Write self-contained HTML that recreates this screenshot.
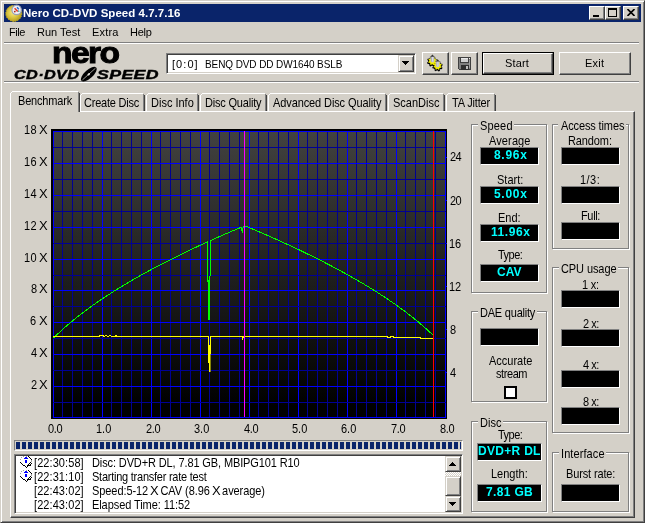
<!DOCTYPE html><html><head><meta charset="utf-8"><title>Nero CD-DVD Speed</title><style>
*{box-sizing:border-box;margin:0;padding:0}
html,body{width:645px;height:523px;overflow:hidden;background:#D4D0C8}
body{position:relative;font:12px "Liberation Sans",sans-serif;color:#000}
.a{position:absolute}
.t{position:absolute;white-space:nowrap;line-height:14px;height:14px}
.hl{position:absolute;height:1px}
.vl{position:absolute;width:1px}
.btn{position:absolute;background:#D4D0C8;border:1px solid;border-color:#fff #404040 #404040 #fff;box-shadow:inset -1px -1px 0 #808080}
.btn2{position:absolute;background:#D4D0C8;border:1px solid;border-color:#D4D0C8 #404040 #404040 #D4D0C8;box-shadow:inset 1px 1px 0 #fff, inset -1px -1px 0 #808080}
.grp{position:absolute;border:1px solid #808080;box-shadow:1px 1px 0 #fff, inset 1px 1px 0 #fff}
.gl{position:absolute;background:#D4D0C8;height:4px}
.bb{position:absolute;background:#000;border:1px solid;border-color:#808080 #fff #fff #808080}
</style></head><body><div id="w" style="position:absolute;left:0;top:0;width:645px;height:523px;will-change:transform">
<div class="a" style="left:0;top:0;width:645px;height:523px;border:1px solid;border-color:#D4D0C8 #404040 #404040 #D4D0C8;box-shadow:inset 1px 1px 0 #fff, inset -1px -1px 0 #808080"></div>
<div class="a" style="left:4px;top:4px;width:637px;height:18px;background:#0A246A"></div>
<svg class="a" style="left:5px;top:4px" width="18" height="18" viewBox="0 0 18 18">
<defs><radialGradient id="cd" cx="45%" cy="45%" r="60%"><stop offset="0" stop-color="#f4e890"/><stop offset="0.45" stop-color="#e0cc48"/><stop offset="1" stop-color="#b09818"/></radialGradient></defs>
<circle cx="8.8" cy="9.4" r="8" fill="url(#cd)"/>
<circle cx="8.8" cy="9.4" r="8" fill="none" stroke="#c8b020" stroke-width="1" stroke-dasharray="1.5 1"/>
<circle cx="11.6" cy="5.9" r="4.7" fill="#f0f0f4" stroke="#98a0b8" stroke-width="1.2"/>
<path d="M9.6 4.2l3.2 3.4" stroke="#e03828" stroke-width="1.5"/>
<path d="M12 3.2l1.8 2" stroke="#2868d8" stroke-width="1.4"/>
<path d="M13.2 6.6l1 1" stroke="#20a090" stroke-width="1.2"/>
<circle cx="9.8" cy="7.6" r="0.9" fill="#b02818"/>
</svg>
<div class="t" id="title" style="left:23.00px;top:6px;font-size:11.5px;letter-spacing:0.028px;color:#fff;font-weight:bold;">Nero CD-DVD Speed 4.7.7.16</div>
<div class="btn" style="left:589px;top:6px;width:16px;height:14px"></div>
<div class="btn" style="left:605px;top:6px;width:16px;height:14px"></div>
<div class="btn" style="left:623px;top:6px;width:16px;height:14px"></div>
<div class="a" style="left:593px;top:15px;width:6px;height:2px;background:#000"></div>
<div class="a" style="left:608px;top:8px;width:9px;height:9px;border:1px solid #000;border-top-width:2px"></div>
<svg class="a" style="left:627px;top:9px" width="8" height="7" viewBox="0 0 8 7"><path d="M0.5 0L7.5 7M7.5 0L0.5 7" stroke="#000" stroke-width="1.6" fill="none"/></svg>
<div class="t" id="menu0" style="left:9.00px;top:25px;font-size:11px;letter-spacing:-0.466px;color:#000;">File</div>
<div class="t" id="menu1" style="left:37.00px;top:25px;font-size:11px;letter-spacing:0.000px;color:#000;">Run Test</div>
<div class="t" id="menu2" style="left:92.00px;top:25px;font-size:11px;letter-spacing:0.175px;color:#000;">Extra</div>
<div class="t" id="menu3" style="left:130.00px;top:25px;font-size:11px;letter-spacing:-0.233px;color:#000;">Help</div>
<div class="hl" style="left:4px;top:42px;width:635px;background:#808080"></div>
<div class="hl" style="left:4px;top:43px;width:635px;background:#fff"></div>
<div class="hl" style="left:4px;top:81px;width:635px;background:#808080"></div>
<div class="hl" style="left:4px;top:82px;width:635px;background:#fff"></div>
<div class="t" id="nero" style="left:52px;top:35px;font:bold 30px 'Liberation Sans',sans-serif;line-height:36px;height:36px;letter-spacing:-1.45px;-webkit-text-stroke:1px #000;transform-origin:0 0;transform:scaleX(1.12)">nero</div>
<div class="t" id="cddvd" style="left:14px;top:68px;font:italic bold 13px 'Liberation Sans',sans-serif;line-height:14px;height:14px;transform-origin:0 0;transform:scaleX(1.25);letter-spacing:0.3px;-webkit-text-stroke:0.45px #000">CD·DVD</div>
<div class="t" id="speed" style="left:97px;top:68px;font:italic bold 13px 'Liberation Sans',sans-serif;line-height:14px;height:14px;transform-origin:0 0;transform:scaleX(1.36);letter-spacing:0.3px;-webkit-text-stroke:0.45px #000">SPEED</div>
<svg class="a" style="left:78px;top:64px" width="20" height="20" viewBox="0 0 20 20">
<g transform="translate(10.8,10.2) rotate(-42)"><ellipse rx="9.9" ry="4.2" fill="#000"/><line x1="-8.5" x2="9" y1="0" y2="0" stroke="#D4D0C8" stroke-width="0.7"/><ellipse rx="1.5" ry="1" fill="#E8E6E0"/></g>
</svg>
<div class="a" style="left:166px;top:53px;width:250px;height:21px;background:#fff;border:1px solid;border-color:#808080 #fff #fff #808080;box-shadow:inset 1px 1px 0 #404040, inset -1px -1px 0 #D4D0C8"></div>
<div class="t" id="combo0" style="left:172.00px;top:57px;font-size:11px;letter-spacing:1.050px;color:#000;">[0:0]</div>
<div class="t" id="combo1" style="left:205.00px;top:58px;font-size:10px;letter-spacing:-0.096px;color:#000;transform:scaleY(1.12);transform-origin:0 11px;">BENQ DVD DD DW1640 BSLB</div>
<div class="btn2" style="left:398px;top:55px;width:16px;height:17px"></div>
<svg class="a" style="left:402px;top:61px" width="7" height="4" shape-rendering="crispEdges"><path d="M0 0h7v1h-1v1h-1v1h-1v1h-1v-1h-1v-1h-1v-1h-1z" fill="#000"/></svg>
<div class="btn" style="left:422px;top:52px;width:27px;height:23px"></div>
<div class="btn" style="left:451px;top:52px;width:27px;height:23px"></div>
<svg class="a" style="left:426px;top:54px" width="19" height="18" viewBox="0 0 19 18"><path d="M10.51 8.35L11.33 9.16L10.70 10.46L9.56 10.30L8.68 11.08L8.69 12.23L7.31 12.70L6.62 11.79L5.45 11.71L4.64 12.53L3.34 11.90L3.50 10.76L2.72 9.88L1.57 9.89L1.10 8.51L2.01 7.82L2.09 6.65L1.27 5.84L1.90 4.54L3.04 4.70L3.92 3.92L3.91 2.77L5.29 2.30L5.98 3.21L7.15 3.29L7.96 2.47L9.26 3.10L9.10 4.24L9.88 5.12L11.03 5.11L11.50 6.49L10.59 7.18Z" fill="#000"/><path d="M15.71 13.05L16.53 13.86L15.90 15.16L14.76 15.00L13.88 15.78L13.89 16.93L12.51 17.40L11.82 16.49L10.65 16.41L9.84 17.23L8.54 16.60L8.70 15.46L7.92 14.58L6.77 14.59L6.30 13.21L7.21 12.52L7.29 11.35L6.47 10.54L7.10 9.24L8.24 9.40L9.12 8.62L9.11 7.47L10.49 7.00L11.18 7.91L12.35 7.99L13.16 7.17L14.46 7.80L14.30 8.94L15.08 9.82L16.23 9.81L16.70 11.19L15.79 11.88Z" fill="#000"/><path d="M9.54 7.64L10.39 8.31L9.88 9.35L8.83 9.09L8.17 9.67L8.29 10.75L7.20 11.12L6.64 10.19L5.76 10.14L5.09 10.99L4.05 10.48L4.31 9.43L3.73 8.77L2.65 8.89L2.28 7.80L3.21 7.24L3.26 6.36L2.41 5.69L2.92 4.65L3.97 4.91L4.63 4.33L4.51 3.25L5.60 2.88L6.16 3.81L7.04 3.86L7.71 3.01L8.75 3.52L8.49 4.57L9.07 5.23L10.15 5.11L10.52 6.20L9.59 6.76Z" fill="#F0EC00"/><circle cx="6.40" cy="6.70" r="1.9" fill="#D4D0C8"/><rect x="4.50" y="1.00" width="3.8" height="5" fill="#D4D0C8"/><path d="M14.74 12.34L15.59 13.01L15.08 14.05L14.03 13.79L13.37 14.37L13.49 15.45L12.40 15.82L11.84 14.89L10.96 14.84L10.29 15.69L9.25 15.18L9.51 14.13L8.93 13.47L7.85 13.59L7.48 12.50L8.41 11.94L8.46 11.06L7.61 10.39L8.12 9.35L9.17 9.61L9.83 9.03L9.71 7.95L10.80 7.58L11.36 8.51L12.24 8.56L12.91 7.71L13.95 8.22L13.69 9.27L14.27 9.93L15.35 9.81L15.72 10.90L14.79 11.46Z" fill="#F0EC00"/><circle cx="11.60" cy="11.40" r="1.9" fill="#D4D0C8"/><rect x="9.70" y="5.70" width="3.8" height="5" fill="#D4D0C8"/><rect x="5.10" y="2.40" width="2.6" height="5.4" fill="#A8A8B8"/><rect x="6.30" y="2.40" width="0.9" height="5.2" fill="#F0F0F8"/><path d="M4.40 2.80L6.40 0.60L8.40 2.80Z" fill="#303030"/><rect x="10.30" y="7.10" width="2.6" height="5.4" fill="#A8A8B8"/><rect x="11.50" y="7.10" width="0.9" height="5.2" fill="#F0F0F8"/><path d="M9.60 7.50L11.60 5.30L13.60 7.50Z" fill="#303030"/></svg>
<svg class="a" style="left:458px;top:57px" width="13" height="13" viewBox="0 0 13 13" shape-rendering="crispEdges">
<rect x="0" y="0" width="13" height="13" fill="#404040"/>
<rect x="1" y="1" width="11" height="11" fill="#808080"/>
<rect x="2" y="0" width="9" height="6" fill="#404040"/>
<rect x="3" y="1" width="7" height="4" fill="#D0D0D0"/>
<rect x="3" y="1" width="7" height="1" fill="#E8E8E8"/>
<rect x="3" y="8" width="8" height="5" fill="#303030"/>
<rect x="8" y="9" width="2" height="3" fill="#C0C0C0"/>
<rect x="11" y="1" width="1" height="1" fill="#F0F0F0"/>
<rect x="11" y="3" width="1" height="8" fill="#A0A0A0"/>
<rect x="0" y="12" width="1" height="1" fill="#D4D0C8"/>
</svg>
<div class="a" style="left:482px;top:52px;width:72px;height:23px;border:1px solid #000"></div>
<div class="btn" style="left:483px;top:53px;width:70px;height:21px"></div>
<div class="t" id="start" style="left:505.00px;top:56px;font-size:11px;letter-spacing:0.175px;color:#000;">Start</div>
<div class="btn" style="left:559px;top:52px;width:72px;height:23px"></div>
<div class="t" id="exit" style="left:585.00px;top:56px;font-size:11px;letter-spacing:0.233px;color:#000;">Exit</div>
<div class="a" style="left:10px;top:111px;width:625px;height:407px;border:1px solid;border-color:#fff #404040 #404040 #fff;box-shadow:inset -1px -1px 0 #808080"></div>
<div class="a" style="left:80px;top:93px;width:65px;height:18px;background:#D4D0C8"><div class="vl" style="left:0;top:2px;height:16px;background:#fff"></div><div class="a" style="left:1px;top:1px;width:1px;height:1px;background:#fff"></div><div class="hl" style="left:2px;top:0;width:61px;background:#fff"></div><div class="vl" style="left:63px;top:1px;height:17px;background:#808080"></div><div class="vl" style="left:64px;top:2px;height:16px;background:#404040"></div></div>
<div class="t" id="tab0" style="left:84.00px;top:96px;font-size:11px;letter-spacing:-0.210px;color:#000;transform:scaleY(1.13);transform-origin:0 11px;">Create Disc</div>
<div class="a" style="left:146px;top:93px;width:53px;height:18px;background:#D4D0C8"><div class="vl" style="left:0;top:2px;height:16px;background:#fff"></div><div class="a" style="left:1px;top:1px;width:1px;height:1px;background:#fff"></div><div class="hl" style="left:2px;top:0;width:49px;background:#fff"></div><div class="vl" style="left:51px;top:1px;height:17px;background:#808080"></div><div class="vl" style="left:52px;top:2px;height:16px;background:#404040"></div></div>
<div class="t" id="tab1" style="left:151.00px;top:96px;font-size:11px;letter-spacing:0.000px;color:#000;transform:scaleY(1.13);transform-origin:0 11px;">Disc Info</div>
<div class="a" style="left:200px;top:93px;width:67px;height:18px;background:#D4D0C8"><div class="vl" style="left:0;top:2px;height:16px;background:#fff"></div><div class="a" style="left:1px;top:1px;width:1px;height:1px;background:#fff"></div><div class="hl" style="left:2px;top:0;width:63px;background:#fff"></div><div class="vl" style="left:65px;top:1px;height:17px;background:#808080"></div><div class="vl" style="left:66px;top:2px;height:16px;background:#404040"></div></div>
<div class="t" id="tab2" style="left:205.00px;top:96px;font-size:11px;letter-spacing:-0.191px;color:#000;transform:scaleY(1.13);transform-origin:0 11px;">Disc Quality</div>
<div class="a" style="left:268px;top:93px;width:119px;height:18px;background:#D4D0C8"><div class="vl" style="left:0;top:2px;height:16px;background:#fff"></div><div class="a" style="left:1px;top:1px;width:1px;height:1px;background:#fff"></div><div class="hl" style="left:2px;top:0;width:115px;background:#fff"></div><div class="vl" style="left:117px;top:1px;height:17px;background:#808080"></div><div class="vl" style="left:118px;top:2px;height:16px;background:#404040"></div></div>
<div class="t" id="tab3" style="left:273.00px;top:96px;font-size:11px;letter-spacing:-0.105px;color:#000;transform:scaleY(1.13);transform-origin:0 11px;">Advanced Disc Quality</div>
<div class="a" style="left:388px;top:93px;width:57px;height:18px;background:#D4D0C8"><div class="vl" style="left:0;top:2px;height:16px;background:#fff"></div><div class="a" style="left:1px;top:1px;width:1px;height:1px;background:#fff"></div><div class="hl" style="left:2px;top:0;width:53px;background:#fff"></div><div class="vl" style="left:55px;top:1px;height:17px;background:#808080"></div><div class="vl" style="left:56px;top:2px;height:16px;background:#404040"></div></div>
<div class="t" id="tab4" style="left:393.00px;top:96px;font-size:11px;letter-spacing:0.000px;color:#000;transform:scaleY(1.13);transform-origin:0 11px;">ScanDisc</div>
<div class="a" style="left:446px;top:93px;width:50px;height:18px;background:#D4D0C8"><div class="vl" style="left:0;top:2px;height:16px;background:#fff"></div><div class="a" style="left:1px;top:1px;width:1px;height:1px;background:#fff"></div><div class="hl" style="left:2px;top:0;width:46px;background:#fff"></div><div class="vl" style="left:48px;top:1px;height:17px;background:#808080"></div><div class="vl" style="left:49px;top:2px;height:16px;background:#404040"></div></div>
<div class="t" id="tab5" style="left:452.00px;top:96px;font-size:11px;letter-spacing:-0.176px;color:#000;transform:scaleY(1.13);transform-origin:0 11px;">TA Jitter</div>
<div class="a" style="left:10px;top:91px;width:70px;height:21px;background:#D4D0C8"><div class="vl" style="left:0;top:2px;height:19px;background:#fff"></div><div class="a" style="left:1px;top:1px;width:1px;height:1px;background:#fff"></div><div class="hl" style="left:2px;top:0;width:66px;background:#fff"></div><div class="vl" style="left:68px;top:1px;height:20px;background:#808080"></div><div class="vl" style="left:69px;top:2px;height:19px;background:#404040"></div></div>
<div class="t" id="tabsel" style="left:18.00px;top:94px;font-size:11px;letter-spacing:-0.175px;color:#000;transform:scaleY(1.13);transform-origin:0 11px;">Benchmark</div>
<svg class="a" style="left:0;top:0" width="645" height="523" viewBox="0 0 645 523" shape-rendering="crispEdges">
<defs><linearGradient id="bg" x1="0" y1="0" x2="0" y2="1"><stop offset="0" stop-color="#424240"/><stop offset="0.96" stop-color="#000000"/></linearGradient></defs>
<rect x="51" y="129" width="396" height="290" fill="#000"/>
<rect x="53" y="131" width="393" height="287" fill="url(#bg)"/>
<rect x="53" y="131" width="1" height="287" fill="#0000FF"/>
<rect x="62" y="131" width="1" height="287" fill="#000094"/>
<rect x="72" y="131" width="1" height="287" fill="#000094"/>
<rect x="82" y="131" width="1" height="287" fill="#000094"/>
<rect x="92" y="131" width="1" height="287" fill="#000094"/>
<rect x="102" y="131" width="1" height="287" fill="#0000FF"/>
<rect x="111" y="131" width="1" height="287" fill="#000094"/>
<rect x="121" y="131" width="1" height="287" fill="#000094"/>
<rect x="131" y="131" width="1" height="287" fill="#000094"/>
<rect x="141" y="131" width="1" height="287" fill="#000094"/>
<rect x="151" y="131" width="1" height="287" fill="#0000FF"/>
<rect x="160" y="131" width="1" height="287" fill="#000094"/>
<rect x="170" y="131" width="1" height="287" fill="#000094"/>
<rect x="180" y="131" width="1" height="287" fill="#000094"/>
<rect x="190" y="131" width="1" height="287" fill="#000094"/>
<rect x="200" y="131" width="1" height="287" fill="#0000FF"/>
<rect x="209" y="131" width="1" height="287" fill="#000094"/>
<rect x="219" y="131" width="1" height="287" fill="#000094"/>
<rect x="229" y="131" width="1" height="287" fill="#000094"/>
<rect x="239" y="131" width="1" height="287" fill="#000094"/>
<rect x="249" y="131" width="1" height="287" fill="#0000FF"/>
<rect x="258" y="131" width="1" height="287" fill="#000094"/>
<rect x="268" y="131" width="1" height="287" fill="#000094"/>
<rect x="278" y="131" width="1" height="287" fill="#000094"/>
<rect x="288" y="131" width="1" height="287" fill="#000094"/>
<rect x="298" y="131" width="1" height="287" fill="#0000FF"/>
<rect x="307" y="131" width="1" height="287" fill="#000094"/>
<rect x="317" y="131" width="1" height="287" fill="#000094"/>
<rect x="327" y="131" width="1" height="287" fill="#000094"/>
<rect x="337" y="131" width="1" height="287" fill="#000094"/>
<rect x="347" y="131" width="1" height="287" fill="#0000FF"/>
<rect x="356" y="131" width="1" height="287" fill="#000094"/>
<rect x="366" y="131" width="1" height="287" fill="#000094"/>
<rect x="376" y="131" width="1" height="287" fill="#000094"/>
<rect x="386" y="131" width="1" height="287" fill="#000094"/>
<rect x="396" y="131" width="1" height="287" fill="#0000FF"/>
<rect x="405" y="131" width="1" height="287" fill="#000094"/>
<rect x="415" y="131" width="1" height="287" fill="#000094"/>
<rect x="425" y="131" width="1" height="287" fill="#000094"/>
<rect x="435" y="131" width="1" height="287" fill="#000094"/>
<rect x="445" y="131" width="1" height="287" fill="#0000FF"/>
<rect x="53" y="131" width="393" height="1" fill="#0000FF"/>
<rect x="53" y="147" width="393" height="1" fill="#000094"/>
<rect x="53" y="163" width="393" height="1" fill="#0000FF"/>
<rect x="53" y="179" width="393" height="1" fill="#000094"/>
<rect x="53" y="195" width="393" height="1" fill="#0000FF"/>
<rect x="53" y="211" width="393" height="1" fill="#000094"/>
<rect x="53" y="227" width="393" height="1" fill="#0000FF"/>
<rect x="53" y="243" width="393" height="1" fill="#000094"/>
<rect x="53" y="259" width="393" height="1" fill="#0000FF"/>
<rect x="53" y="275" width="393" height="1" fill="#000094"/>
<rect x="53" y="290" width="393" height="1" fill="#0000FF"/>
<rect x="53" y="306" width="393" height="1" fill="#000094"/>
<rect x="53" y="322" width="393" height="1" fill="#0000FF"/>
<rect x="53" y="338" width="393" height="1" fill="#000094"/>
<rect x="53" y="354" width="393" height="1" fill="#0000FF"/>
<rect x="53" y="370" width="393" height="1" fill="#000094"/>
<rect x="53" y="386" width="393" height="1" fill="#0000FF"/>
<rect x="53" y="402" width="393" height="1" fill="#000094"/>
<rect x="53" y="417" width="393" height="1" fill="#0000FF"/>
<rect x="446" y="372" width="1" height="1" fill="#0000FF"/>
<rect x="446" y="329" width="1" height="1" fill="#0000FF"/>
<rect x="446" y="286" width="1" height="1" fill="#0000FF"/>
<rect x="446" y="243" width="1" height="1" fill="#0000FF"/>
<rect x="446" y="200" width="1" height="1" fill="#0000FF"/>
<rect x="446" y="157" width="1" height="1" fill="#0000FF"/>
</svg>
<svg class="a" style="left:0;top:0" width="645" height="523" viewBox="0 0 645 523">
<polyline shape-rendering="crispEdges" fill="none" stroke="#00FF00" stroke-width="1" points="53.5,338.1 54.5,337.1 55.5,336.1 56.5,335.1 57.5,334.1 58.5,333.2 59.5,332.3 60.5,331.3 61.5,330.4 62.5,329.5 63.5,328.6 64.5,327.7 65.5,326.8 66.5,326.0 67.5,325.1 68.5,324.2 69.5,323.4 70.5,322.5 71.5,321.7 72.5,320.9 73.5,320.1 74.5,319.2 75.5,318.4 76.5,317.6 77.5,316.8 78.5,316.1 79.5,315.3 80.5,314.5 81.5,313.7 82.5,313.0 83.5,312.2 84.5,311.4 85.5,310.7 86.5,310.0 87.5,309.2 88.5,308.5 89.5,307.8 90.5,307.0 91.5,306.3 92.5,305.6 93.5,304.9 94.5,304.2 95.5,303.5 96.5,302.8 97.5,302.1 98.5,301.4 99.5,300.7 100.5,300.1 101.5,299.4 102.5,298.7 103.5,298.0 104.5,297.4 105.5,296.7 106.5,296.1 107.5,295.4 108.5,294.8 109.5,294.1 110.5,293.5 111.5,292.8 112.5,292.2 113.5,291.5 114.5,290.9 115.5,290.3 116.5,289.7 117.5,289.0 118.5,288.4 119.5,287.8 120.5,287.2 121.5,286.6 122.5,286.0 123.5,285.4 124.5,284.8 125.5,284.2 126.5,283.6 127.5,283.0 128.5,282.4 129.5,281.8 130.5,281.2 131.5,280.6 132.5,280.1 133.5,279.5 134.5,278.9 135.5,278.3 136.5,277.8 137.5,277.2 138.5,276.6 139.5,276.1 140.5,275.5 141.5,274.9 142.5,274.4 143.5,273.8 144.5,273.3 145.5,272.7 146.5,272.2 147.5,271.6 148.5,271.1 149.5,270.5 150.5,270.0 151.5,269.5 152.5,268.9 153.5,268.4 154.5,267.9 155.5,267.3 156.5,266.8 157.5,266.3 158.5,265.8 159.5,265.2 160.5,264.7 161.5,264.2 162.5,263.7 163.5,263.2 164.5,262.6 165.5,262.1 166.5,261.6 167.5,261.1 168.5,260.6 169.5,260.1 170.5,259.6 171.5,259.1 172.5,258.6 173.5,258.1 174.5,257.6 175.5,257.1 176.5,256.6 177.5,256.1 178.5,255.6 179.5,255.1 180.5,254.6 181.5,254.1 182.5,253.6 183.5,253.2 184.5,252.7 185.5,252.2 186.5,251.7 187.5,251.2 188.5,250.8 189.5,250.3 190.5,249.8 191.5,249.3 192.5,248.9 193.5,248.4 194.5,247.9 195.5,247.4 196.5,247.0 197.5,246.5 198.5,246.0 199.5,245.6 200.5,245.1 201.5,244.7 202.5,244.2 203.5,243.7 204.5,243.3 205.5,242.8 206.5,242.4 207.5,241.9 207.5,262.0 208.5,300.0 209.0,319.5 209.5,300.0 210.3,262.0 210.5,240.5 211.5,240.1 212.5,239.7 213.5,239.2 214.5,238.8 215.5,238.3 216.5,237.9 217.5,237.4 218.5,237.0 219.5,236.6 220.5,236.1 221.5,235.7 222.5,235.2 223.5,234.8 224.5,234.4 225.5,233.9 226.5,233.5 227.5,233.1 228.5,232.6 229.5,232.2 230.5,231.8 231.5,231.4 232.5,230.9 233.5,230.5 234.5,230.1 235.5,229.7 236.5,229.2 237.5,228.8 238.5,228.4 239.5,228.0 240.5,227.5 241.5,227.1 242.3,232.5 243.2,227.0 245.0,225.9 246.0,226.3 247.0,226.7 248.0,227.1 249.0,227.6 250.0,228.0 251.0,228.4 252.0,228.8 253.0,229.3 254.0,229.7 255.0,230.1 256.0,230.5 257.0,231.0 258.0,231.4 259.0,231.8 260.0,232.2 261.0,232.7 262.0,233.1 263.0,233.5 264.0,234.0 265.0,234.4 266.0,234.8 267.0,235.3 268.0,235.7 269.0,236.1 270.0,236.6 271.0,237.0 272.0,237.5 273.0,237.9 274.0,238.4 275.0,238.8 276.0,239.2 277.0,239.7 278.0,240.1 279.0,240.6 280.0,241.0 281.0,241.5 282.0,241.9 283.0,242.4 284.0,242.9 285.0,243.3 286.0,243.8 287.0,244.2 288.0,244.7 289.0,245.1 290.0,245.6 291.0,246.1 292.0,246.5 293.0,247.0 294.0,247.5 295.0,247.9 296.0,248.4 297.0,248.9 298.0,249.4 299.0,249.8 300.0,250.3 301.0,250.8 302.0,251.3 303.0,251.7 304.0,252.2 305.0,252.7 306.0,253.2 307.0,253.7 308.0,254.2 309.0,254.6 310.0,255.1 311.0,255.6 312.0,256.1 313.0,256.6 314.0,257.1 315.0,257.6 316.0,258.1 317.0,258.6 318.0,259.1 319.0,259.6 320.0,260.1 321.0,260.6 322.0,261.1 323.0,261.6 324.0,262.1 325.0,262.7 326.0,263.2 327.0,263.7 328.0,264.2 329.0,264.7 330.0,265.3 331.0,265.8 332.0,266.3 333.0,266.8 334.0,267.4 335.0,267.9 336.0,268.4 337.0,269.0 338.0,269.5 339.0,270.0 340.0,270.6 341.0,271.1 342.0,271.7 343.0,272.2 344.0,272.8 345.0,273.3 346.0,273.9 347.0,274.4 348.0,275.0 349.0,275.5 350.0,276.1 351.0,276.7 352.0,277.2 353.0,277.8 354.0,278.4 355.0,278.9 356.0,279.5 357.0,280.1 358.0,280.7 359.0,281.3 360.0,281.8 361.0,282.4 362.0,283.0 363.0,283.6 364.0,284.2 365.0,284.8 366.0,285.4 367.0,286.0 368.0,286.6 369.0,287.2 370.0,287.8 371.0,288.5 372.0,289.1 373.0,289.7 374.0,290.3 375.0,291.0 376.0,291.6 377.0,292.2 378.0,292.9 379.0,293.5 380.0,294.1 381.0,294.8 382.0,295.4 383.0,296.1 384.0,296.7 385.0,297.4 386.0,298.1 387.0,298.7 388.0,299.4 389.0,300.1 390.0,300.8 391.0,301.5 392.0,302.1 393.0,302.8 394.0,303.5 395.0,304.2 396.0,304.9 397.0,305.6 398.0,306.4 399.0,307.1 400.0,307.8 401.0,308.5 402.0,309.3 403.0,310.0 404.0,310.7 405.0,311.5 406.0,312.2 407.0,313.0 408.0,313.8 409.0,314.5 410.0,315.3 411.0,316.1 412.0,316.9 413.0,317.7 414.0,318.5 415.0,319.3 416.0,320.1 417.0,320.9 418.0,321.7 419.0,322.6 420.0,323.4 421.0,324.3 422.0,325.1 423.0,326.0 424.0,326.9 425.0,327.8 426.0,328.6 427.0,329.5 428.0,330.5 429.0,331.4 430.0,332.3 431.0,333.2 432.0,334.2 433.0,335.2"/>
<rect x="208" y="280" width="2" height="40" fill="#00FF00"/>
<polyline shape-rendering="crispEdges" fill="none" stroke="#FFFF00" stroke-width="1" points="53.0,336.5 99.0,336.5 100.0,335.5 103.0,335.5 104.0,336.5 106.0,335.5 108.0,336.5 110.0,335.5 112.0,336.5 115.0,336.5 116.0,335.5 117.0,336.5 208.5,336.5 208.7,355.0 209.3,371.0 210.0,355.0 210.5,336.5 242.0,336.5 242.6,339.5 243.3,336.5 387.0,336.5 388.0,337.5 390.0,337.5 391.0,336.5 393.0,336.5 394.0,337.5 420.0,337.5 421.0,338.5 432.5,338.5"/>
<rect x="209" y="345" width="1.5" height="27" fill="#FFFF00"/>
<rect shape-rendering="crispEdges" x="244" y="131" width="1" height="286" fill="#FF00FF"/>
<rect shape-rendering="crispEdges" x="433" y="131" width="1" height="286" fill="#FF0000"/>
</svg>
<div class="t" id="yl18" style="left:24.00px;top:123px;font-size:11px;letter-spacing:0.350px;color:#000;transform:scaleY(1.13);transform-origin:0 11px;">18<span style="display:inline-block;margin-left:2px;transform:scaleX(1.18);transform-origin:0 0;letter-spacing:0">X</span></div>
<div class="t" id="yl16" style="left:24.00px;top:155px;font-size:11px;letter-spacing:0.350px;color:#000;transform:scaleY(1.13);transform-origin:0 11px;">16<span style="display:inline-block;margin-left:2px;transform:scaleX(1.18);transform-origin:0 0;letter-spacing:0">X</span></div>
<div class="t" id="yl14" style="left:24.00px;top:187px;font-size:11px;letter-spacing:0.350px;color:#000;transform:scaleY(1.13);transform-origin:0 11px;">14<span style="display:inline-block;margin-left:2px;transform:scaleX(1.18);transform-origin:0 0;letter-spacing:0">X</span></div>
<div class="t" id="yl12" style="left:24.00px;top:219px;font-size:11px;letter-spacing:0.350px;color:#000;transform:scaleY(1.13);transform-origin:0 11px;">12<span style="display:inline-block;margin-left:2px;transform:scaleX(1.18);transform-origin:0 0;letter-spacing:0">X</span></div>
<div class="t" id="yl10" style="left:24.00px;top:251px;font-size:11px;letter-spacing:0.350px;color:#000;transform:scaleY(1.13);transform-origin:0 11px;">10<span style="display:inline-block;margin-left:2px;transform:scaleX(1.18);transform-origin:0 0;letter-spacing:0">X</span></div>
<div class="t" id="yl8" style="left:31.00px;top:282px;font-size:11px;letter-spacing:0.000px;color:#000;transform:scaleY(1.13);transform-origin:0 11px;">8<span style="display:inline-block;margin-left:2px;transform:scaleX(1.18);transform-origin:0 0;letter-spacing:0">X</span></div>
<div class="t" id="yl6" style="left:30.00px;top:314px;font-size:11px;letter-spacing:0.700px;color:#000;transform:scaleY(1.13);transform-origin:0 11px;">6<span style="display:inline-block;margin-left:2px;transform:scaleX(1.18);transform-origin:0 0;letter-spacing:0">X</span></div>
<div class="t" id="yl4" style="left:31.00px;top:346px;font-size:11px;letter-spacing:0.000px;color:#000;transform:scaleY(1.13);transform-origin:0 11px;">4<span style="display:inline-block;margin-left:2px;transform:scaleX(1.18);transform-origin:0 0;letter-spacing:0">X</span></div>
<div class="t" id="yl2" style="left:31.00px;top:378px;font-size:11px;letter-spacing:0.000px;color:#000;transform:scaleY(1.13);transform-origin:0 11px;">2<span style="display:inline-block;margin-left:2px;transform:scaleX(1.18);transform-origin:0 0;letter-spacing:0">X</span></div>
<div class="t" id="xl0" style="left:48.00px;top:422px;font-size:11px;letter-spacing:-0.350px;color:#000;transform:scaleY(1.13);transform-origin:0 11px;">0.0</div>
<div class="t" id="xl1" style="left:96.00px;top:422px;font-size:11px;letter-spacing:0.000px;color:#000;transform:scaleY(1.13);transform-origin:0 11px;">1.0</div>
<div class="t" id="xl2" style="left:146.00px;top:422px;font-size:11px;letter-spacing:-0.350px;color:#000;transform:scaleY(1.13);transform-origin:0 11px;">2.0</div>
<div class="t" id="xl3" style="left:194.00px;top:422px;font-size:11px;letter-spacing:0.000px;color:#000;transform:scaleY(1.13);transform-origin:0 11px;">3.0</div>
<div class="t" id="xl4" style="left:244.00px;top:422px;font-size:11px;letter-spacing:-0.350px;color:#000;transform:scaleY(1.13);transform-origin:0 11px;">4.0</div>
<div class="t" id="xl5" style="left:292.00px;top:422px;font-size:11px;letter-spacing:0.000px;color:#000;transform:scaleY(1.13);transform-origin:0 11px;">5.0</div>
<div class="t" id="xl6" style="left:341.00px;top:422px;font-size:11px;letter-spacing:0.000px;color:#000;transform:scaleY(1.13);transform-origin:0 11px;">6.0</div>
<div class="t" id="xl7" style="left:391.00px;top:422px;font-size:11px;letter-spacing:-0.350px;color:#000;transform:scaleY(1.13);transform-origin:0 11px;">7.0</div>
<div class="t" id="xl8" style="left:440.00px;top:422px;font-size:11px;letter-spacing:-0.350px;color:#000;transform:scaleY(1.13);transform-origin:0 11px;">8.0</div>
<div class="t" id="rl4" style="left:450.00px;top:366px;font-size:11px;letter-spacing:0.000px;color:#000;transform:scaleY(1.13);transform-origin:0 11px;">4</div>
<div class="t" id="rl8" style="left:450.00px;top:323px;font-size:11px;letter-spacing:0.000px;color:#000;transform:scaleY(1.13);transform-origin:0 11px;">8</div>
<div class="t" id="rl12" style="left:449.00px;top:280px;font-size:11px;letter-spacing:0.000px;color:#000;transform:scaleY(1.13);transform-origin:0 11px;">12</div>
<div class="t" id="rl16" style="left:449.00px;top:237px;font-size:11px;letter-spacing:0.000px;color:#000;transform:scaleY(1.13);transform-origin:0 11px;">16</div>
<div class="t" id="rl20" style="left:450.00px;top:194px;font-size:11px;letter-spacing:-0.700px;color:#000;transform:scaleY(1.13);transform-origin:0 11px;">20</div>
<div class="t" id="rl24" style="left:450.00px;top:150px;font-size:11px;letter-spacing:-0.700px;color:#000;transform:scaleY(1.13);transform-origin:0 11px;">24</div>
<div class="a" style="left:14px;top:440px;width:449px;height:11px;border:1px solid;border-color:#808080 #fff #fff #808080"></div>
<div class="a" style="left:16px;top:442px;width:445px;height:7px;background:repeating-linear-gradient(90deg,#0A246A 0,#0A246A 4px,transparent 4px,transparent 6px)"></div>
<div class="a" style="left:14px;top:454px;width:449px;height:60px;background:#fff;border:1px solid;border-color:#808080 #fff #fff #808080;box-shadow:inset 1px 1px 0 #404040, inset -1px -1px 0 #D4D0C8"></div>
<div class="t" id="lt0" style="left:34.00px;top:456px;font-size:11px;letter-spacing:0.078px;color:#000;transform:scaleY(1.13);transform-origin:0 11px;">[22:30:58]</div>
<div class="t" id="lm0" style="left:92.00px;top:456px;font-size:11px;letter-spacing:-0.116px;color:#000;transform:scaleY(1.13);transform-origin:0 11px;">Disc: DVD+R DL, 7.81 GB, MBIPG101 R10</div>
<svg class="a" style="left:19px;top:455px" width="14" height="14" viewBox="0 0 14 14" shape-rendering="crispEdges"><g fill="#000"><rect x="9" y="1" width="1" height="1"/><rect x="10" y="2" width="1" height="1"/><rect x="11" y="3" width="1" height="1"/><rect x="12" y="4" width="1" height="1"/><rect x="11" y="7" width="1" height="1"/><rect x="12" y="8" width="1" height="1"/><rect x="10" y="8" width="1" height="1"/><rect x="11" y="9" width="1" height="1"/><rect x="10" y="10" width="1" height="1"/><rect x="9" y="9" width="1" height="1"/><rect x="11" y="10" width="1" height="1"/><rect x="1" y="7" width="1" height="1"/><rect x="2" y="8" width="1" height="1"/><rect x="3" y="9" width="1" height="1"/><rect x="4" y="10" width="1" height="1"/><rect x="5" y="10" width="1" height="1"/><rect x="6" y="11" width="1" height="1"/><rect x="7" y="12" width="1" height="1"/><rect x="8" y="11" width="1" height="1"/><rect x="8" y="10" width="1" height="1"/><rect x="9" y="10" width="1" height="1"/></g><g fill="#A0A0A0"><rect x="2" y="2" width="1" height="1"/><rect x="1" y="4" width="1" height="1"/><rect x="12" y="5" width="1" height="1"/><rect x="12" y="6" width="1" height="1"/><rect x="7" y="1" width="1" height="1"/><rect x="4" y="1" width="1" height="1"/></g><g fill="#0000FF"><rect x="6" y="2" width="1" height="1"/><rect x="7" y="2" width="1" height="1"/><rect x="5" y="3" width="1" height="1"/><rect x="6" y="3" width="1" height="1"/><rect x="7" y="3" width="1" height="1"/><rect x="8" y="3" width="1" height="1"/><rect x="6" y="5" width="1" height="1"/><rect x="7" y="5" width="1" height="1"/><rect x="6" y="6" width="1" height="1"/><rect x="7" y="6" width="1" height="1"/><rect x="6" y="7" width="1" height="1"/><rect x="7" y="7" width="1" height="1"/></g></svg>
<div class="t" id="lt1" style="left:34.00px;top:470px;font-size:11px;letter-spacing:0.078px;color:#000;transform:scaleY(1.13);transform-origin:0 11px;">[22:31:10]</div>
<div class="t" id="lm1" style="left:92.00px;top:470px;font-size:11px;letter-spacing:-0.243px;color:#000;transform:scaleY(1.13);transform-origin:0 11px;">Starting transfer rate test</div>
<svg class="a" style="left:19px;top:469px" width="14" height="14" viewBox="0 0 14 14" shape-rendering="crispEdges"><g fill="#000"><rect x="9" y="1" width="1" height="1"/><rect x="10" y="2" width="1" height="1"/><rect x="11" y="3" width="1" height="1"/><rect x="12" y="4" width="1" height="1"/><rect x="11" y="7" width="1" height="1"/><rect x="12" y="8" width="1" height="1"/><rect x="10" y="8" width="1" height="1"/><rect x="11" y="9" width="1" height="1"/><rect x="10" y="10" width="1" height="1"/><rect x="9" y="9" width="1" height="1"/><rect x="11" y="10" width="1" height="1"/><rect x="1" y="7" width="1" height="1"/><rect x="2" y="8" width="1" height="1"/><rect x="3" y="9" width="1" height="1"/><rect x="4" y="10" width="1" height="1"/><rect x="5" y="10" width="1" height="1"/><rect x="6" y="11" width="1" height="1"/><rect x="7" y="12" width="1" height="1"/><rect x="8" y="11" width="1" height="1"/><rect x="8" y="10" width="1" height="1"/><rect x="9" y="10" width="1" height="1"/></g><g fill="#A0A0A0"><rect x="2" y="2" width="1" height="1"/><rect x="1" y="4" width="1" height="1"/><rect x="12" y="5" width="1" height="1"/><rect x="12" y="6" width="1" height="1"/><rect x="7" y="1" width="1" height="1"/><rect x="4" y="1" width="1" height="1"/></g><g fill="#0000FF"><rect x="6" y="2" width="1" height="1"/><rect x="7" y="2" width="1" height="1"/><rect x="5" y="3" width="1" height="1"/><rect x="6" y="3" width="1" height="1"/><rect x="7" y="3" width="1" height="1"/><rect x="8" y="3" width="1" height="1"/><rect x="6" y="5" width="1" height="1"/><rect x="7" y="5" width="1" height="1"/><rect x="6" y="6" width="1" height="1"/><rect x="7" y="6" width="1" height="1"/><rect x="6" y="7" width="1" height="1"/><rect x="7" y="7" width="1" height="1"/></g></svg>
<div class="t" id="lt2" style="left:34.00px;top:484px;font-size:11px;letter-spacing:0.078px;color:#000;transform:scaleY(1.13);transform-origin:0 11px;">[22:43:02]</div>
<div class="t" id="lm2" style="left:92.00px;top:484px;font-size:11px;letter-spacing:-0.075px;color:#000;transform:scaleY(1.13);transform-origin:0 11px;">Speed:5-12<span style="display:inline-block;margin:0 3px 0 2px;transform:scaleX(1.18);transform-origin:0 0;letter-spacing:0">X</span>CAV (8.96<span style="display:inline-block;margin:0 3px 0 2px;transform:scaleX(1.18);transform-origin:0 0;letter-spacing:0">X</span>average)</div>
<div class="t" id="lt3" style="left:34.00px;top:498px;font-size:11px;letter-spacing:0.078px;color:#000;transform:scaleY(1.13);transform-origin:0 11px;">[22:43:02]</div>
<div class="t" id="lm3" style="left:92.00px;top:498px;font-size:11px;letter-spacing:-0.078px;color:#000;transform:scaleY(1.13);transform-origin:0 11px;">Elapsed Time: 11:52</div>
<div class="a" style="left:445px;top:456px;width:16px;height:56px;background:repeating-conic-gradient(#fff 0 25%,#D4D0C8 0 50%) 0 0/2px 2px"></div>
<div class="btn2" style="left:445px;top:456px;width:16px;height:16px"></div>
<div class="btn2" style="left:445px;top:476px;width:16px;height:20px"></div>
<div class="btn2" style="left:445px;top:496px;width:16px;height:16px"></div>
<svg class="a" style="left:449px;top:462px" width="7" height="4" shape-rendering="crispEdges"><path d="M3 0h1v1h1v1h1v1h1v1h-7v-1h1v-1h1v-1h1z" fill="#000"/></svg>
<svg class="a" style="left:449px;top:502px" width="7" height="4" shape-rendering="crispEdges"><path d="M0 0h7v1h-1v1h-1v1h-1v1h-1v-1h-1v-1h-1v-1h-1z" fill="#000"/></svg>
<div class="grp" style="left:471px;top:124px;width:76px;height:169px"></div>
<div class="gl" style="left:478px;top:123px;width:36px"></div>
<div class="t" id="gSpeed" style="left:480.00px;top:119px;font-size:11px;letter-spacing:0.175px;color:#000;transform:scaleY(1.13);transform-origin:0 11px;">Speed</div>
<div class="t" id="lAvg" style="left:489.00px;top:134px;font-size:11px;letter-spacing:0.117px;color:#000;transform:scaleY(1.13);transform-origin:0 11px;">Average</div>
<div class="bb" style="left:480px;top:147px;width:59px;height:18px"></div>
<div class="t" id="vAvg" style="left:494.00px;top:148px;font-size:12px;letter-spacing:0.700px;color:#00FFFF;font-weight:bold;">8.96x</div>
<div class="t" id="lStart" style="left:497.00px;top:173px;font-size:11px;letter-spacing:0.000px;color:#000;transform:scaleY(1.13);transform-origin:0 11px;">Start:</div>
<div class="bb" style="left:480px;top:186px;width:59px;height:18px"></div>
<div class="t" id="vStart" style="left:494.00px;top:187px;font-size:12px;letter-spacing:0.700px;color:#00FFFF;font-weight:bold;">5.00x</div>
<div class="t" id="lEnd" style="left:498.00px;top:211px;font-size:11px;letter-spacing:0.000px;color:#000;transform:scaleY(1.13);transform-origin:0 11px;">End:</div>
<div class="bb" style="left:480px;top:224px;width:59px;height:18px"></div>
<div class="t" id="vEnd" style="left:491.00px;top:225px;font-size:12px;letter-spacing:0.560px;color:#00FFFF;font-weight:bold;">11.96x</div>
<div class="t" id="lType" style="left:498.00px;top:248px;font-size:11px;letter-spacing:-0.525px;color:#000;transform:scaleY(1.13);transform-origin:0 11px;">Type:</div>
<div class="bb" style="left:480px;top:264px;width:59px;height:18px"></div>
<div class="t" id="vType" style="left:497.00px;top:265px;font-size:12px;letter-spacing:0.000px;color:#00FFFF;font-weight:bold;">CAV</div>
<div class="grp" style="left:552px;top:124px;width:77px;height:125px"></div>
<div class="gl" style="left:558px;top:123px;width:68px"></div>
<div class="t" id="gAcc" style="left:561.00px;top:119px;font-size:11px;letter-spacing:-0.128px;color:#000;transform:scaleY(1.13);transform-origin:0 11px;">Access times</div>
<div class="t" id="lRandom" style="left:568.00px;top:134px;font-size:11px;letter-spacing:-0.117px;color:#000;transform:scaleY(1.13);transform-origin:0 11px;">Random:</div>
<div class="bb" style="left:561px;top:147px;width:59px;height:18px"></div>
<div class="t" id="l13" style="left:580.00px;top:173px;font-size:11px;letter-spacing:0.467px;color:#000;transform:scaleY(1.13);transform-origin:0 11px;">1/3:</div>
<div class="bb" style="left:561px;top:186px;width:59px;height:18px"></div>
<div class="t" id="lFull" style="left:581.00px;top:209px;font-size:11px;letter-spacing:-0.350px;color:#000;transform:scaleY(1.13);transform-origin:0 11px;">Full:</div>
<div class="bb" style="left:561px;top:222px;width:59px;height:18px"></div>
<div class="grp" style="left:552px;top:267px;width:77px;height:166px"></div>
<div class="gl" style="left:559px;top:266px;width:59px"></div>
<div class="t" id="gCpu" style="left:561.00px;top:262px;font-size:11px;letter-spacing:-0.088px;color:#000;transform:scaleY(1.13);transform-origin:0 11px;">CPU usage</div>
<div class="t" id="l1x" style="left:582.00px;top:278px;font-size:11px;letter-spacing:-0.233px;color:#000;transform:scaleY(1.13);transform-origin:0 11px;">1 x:</div>
<div class="bb" style="left:561px;top:290px;width:59px;height:18px"></div>
<div class="t" id="l2x" style="left:583.00px;top:317px;font-size:11px;letter-spacing:-0.467px;color:#000;transform:scaleY(1.13);transform-origin:0 11px;">2 x:</div>
<div class="bb" style="left:561px;top:329px;width:59px;height:18px"></div>
<div class="t" id="l4x" style="left:583.00px;top:358px;font-size:11px;letter-spacing:-0.467px;color:#000;transform:scaleY(1.13);transform-origin:0 11px;">4 x:</div>
<div class="bb" style="left:561px;top:370px;width:59px;height:18px"></div>
<div class="t" id="l8x" style="left:583.00px;top:395px;font-size:11px;letter-spacing:-0.467px;color:#000;transform:scaleY(1.13);transform-origin:0 11px;">8 x:</div>
<div class="bb" style="left:561px;top:407px;width:59px;height:18px"></div>
<div class="grp" style="left:471px;top:311px;width:76px;height:91px"></div>
<div class="gl" style="left:478px;top:310px;width:59px"></div>
<div class="t" id="gDae" style="left:480.00px;top:306px;font-size:11px;letter-spacing:-0.210px;color:#000;transform:scaleY(1.13);transform-origin:0 11px;">DAE quality</div>
<div class="bb" style="left:480px;top:328px;width:59px;height:18px"></div>
<div class="t" id="lAcc" style="left:489.00px;top:354px;font-size:11px;letter-spacing:0.000px;color:#000;transform:scaleY(1.13);transform-origin:0 11px;">Accurate</div>
<div class="t" id="lStream" style="left:496.00px;top:367px;font-size:11px;letter-spacing:-0.420px;color:#000;transform:scaleY(1.13);transform-origin:0 11px;">stream</div>
<div class="a" style="left:504px;top:386px;width:13px;height:13px;background:#fff;border:2px solid #000"></div>
<div class="grp" style="left:471px;top:421px;width:76px;height:91px"></div>
<div class="gl" style="left:478px;top:420px;width:25px"></div>
<div class="t" id="gDisc" style="left:480.00px;top:416px;font-size:11px;letter-spacing:0.000px;color:#000;transform:scaleY(1.13);transform-origin:0 11px;">Disc</div>
<div class="t" id="lDType" style="left:498.00px;top:428px;font-size:11px;letter-spacing:-0.525px;color:#000;transform:scaleY(1.13);transform-origin:0 11px;">Type:</div>
<div class="bb" style="left:477px;top:443px;width:65px;height:18px"></div>
<div class="t" id="vDType" style="left:478.00px;top:444px;font-size:12px;letter-spacing:0.300px;color:#00FFFF;font-weight:bold;">DVD+R DL</div>
<div class="t" id="lLen" style="left:491.00px;top:467px;font-size:11px;letter-spacing:0.000px;color:#000;transform:scaleY(1.13);transform-origin:0 11px;">Length:</div>
<div class="bb" style="left:477px;top:484px;width:65px;height:18px"></div>
<div class="t" id="vLen" style="left:486.00px;top:485px;font-size:12px;letter-spacing:0.350px;color:#00FFFF;font-weight:bold;">7.81 GB</div>
<div class="grp" style="left:552px;top:452px;width:77px;height:60px"></div>
<div class="gl" style="left:559px;top:451px;width:47px"></div>
<div class="t" id="gIf" style="left:561.00px;top:447px;font-size:11px;letter-spacing:0.088px;color:#000;transform:scaleY(1.13);transform-origin:0 11px;">Interface</div>
<div class="t" id="lBurst" style="left:566.00px;top:467px;font-size:11px;letter-spacing:-0.140px;color:#000;transform:scaleY(1.13);transform-origin:0 11px;">Burst rate:</div>
<div class="bb" style="left:561px;top:484px;width:59px;height:18px"></div>
</div></body></html>
